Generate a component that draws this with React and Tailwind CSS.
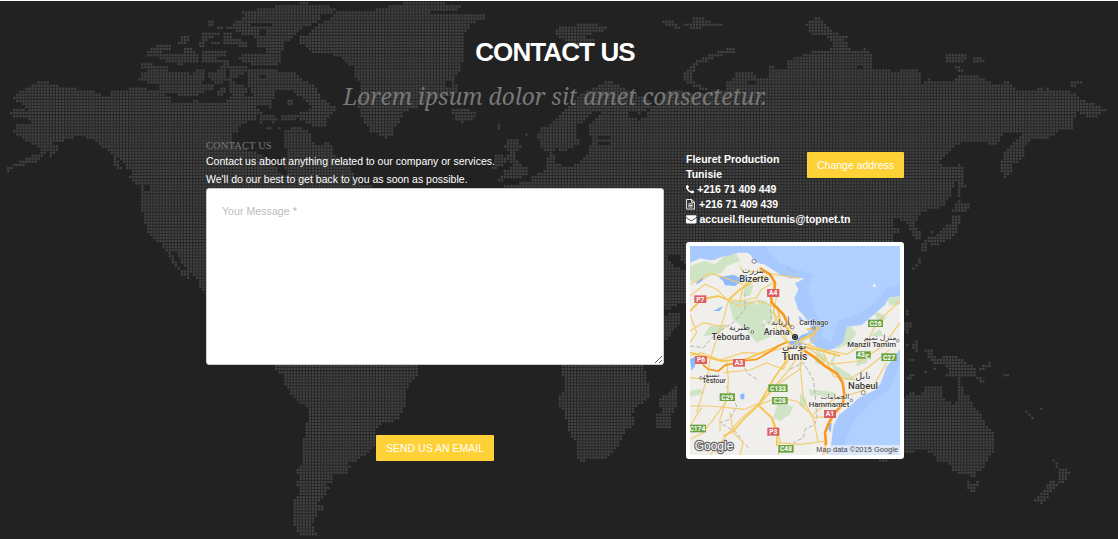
import React from "react";

const PITCH = 3.048;
const ORIGIN_X = 7.7 - PITCH * 3;
const ORIGIN_Y = 82.1 - PITCH * 27;

// World outline, split into six panels. "+" adds land, "-" carves out water.
const PANELS = [
  {
    x: 0,
    y: 0,
    shapes: [
      ["+", "115,243 135,243 165,252 190,262 225,262 232,268 275,268 300,280 312,290 325,283 335,272 345,272 358,262 368,270 390,262 430,262 460,268 490,268 490,280 515,292 515,303 560,303 590,300 600,303 680,303 690,290 700,285 740,285 770,290 775,310 770,325 780,335 770,350 765,360 740,362 720,380 710,392 695,405 695,425 720,440 760,455 800,470 830,500 840,525 860,520 850,490 860,460 853,430 853,390 880,380 915,385 930,400 935,425 960,435 980,420 995,440 1000,460 1030,480 1050,500 1060,520 1070,540 1119,560 1119,570 620,570 620,810 560,810 545,790 525,755 510,745 520,775 540,810 530,805 515,790 505,765 495,750 480,730 460,715 445,700 432,660 422,625 422,560 395,545 385,530 395,515 375,500 365,480 345,470 325,450 300,435 285,420 260,412 225,405 205,418 175,425 165,420 155,430 175,440 165,455 150,468 145,450 130,460 105,485 80,490 60,500 40,500 20,515 15,510 25,498 60,480 100,462 120,455 110,440 90,430 60,410 38,400 45,375 70,370 90,365 85,350 60,355 35,350 30,338 40,325 70,325 80,330 75,320 60,310 38,292 50,283 65,268 90,255"],
      ["+", "335,480 350,470 355,490 368,512 355,508 342,495"],
      ["-", "425,548 445,555 445,575 435,570"],
      ["+", "690,75 730,50 725,35 740,30 820,20 830,12 890,12 905,3 925,6 925,14 980,12 1005,25 1005,30 990,38 960,45 965,55 950,68 920,75 905,85 890,95 880,110 850,130 855,145 840,150 840,190 820,193 760,193 715,180 720,165 735,155 770,160 800,155 810,148 770,140 765,115 750,105 720,100 700,90"],
      ["-", "750,66 815,66 815,78 750,78"],
      ["-", "780,88 796,88 796,102 780,102"],
      ["+", "622,60 640,60 640,76 622,76"],
      ["+", "648,77 668,77 668,85 648,85"],
      ["+", "675,77 695,77 695,87 675,87"],
      ["+", "540,105 565,105 565,115 552,137 532,135 532,124 543,122"],
      ["+", "605,96 655,94 655,105 620,115 612,142 597,142 600,120"],
      ["+", "665,100 690,98 700,115 735,120 740,142 715,137 670,127"],
      ["+", "635,123 662,123 662,136 635,130"],
      ["+", "440,150 470,133 512,133 512,145 480,155 520,160 545,155 555,141 572,141 590,160 595,183 560,187 540,197 520,187 490,182 470,168 440,166"],
      ["+", "600,153 677,150 677,167 640,170 660,180 690,180 690,192 600,190"],
      ["+", "422,188 455,188 465,195 500,198 505,213 530,210 560,213 575,222 590,203 612,208 615,230 600,250 640,250 640,270 600,275 590,287 550,287 500,277 480,265 470,247 440,247 413,240 418,222 435,210 422,200"],
      ["+", "620,220 650,208 680,203 682,242 645,252 630,240"],
      ["+", "655,195 685,195 685,203 655,203"],
      ["+", "688,198 742,198 742,215 720,225 690,240"],
      ["+", "650,270 675,258 678,282 650,285"],
      ["+", "688,243 730,250 740,270 730,290 700,295 688,270"],
      ["+", "740,208 830,203 840,218 885,218 905,235 945,258 955,280 965,293 985,305 1003,318 1003,335 985,347 978,378 950,382 930,370 905,360 885,345 900,335 925,330 930,320 910,300 895,285 870,270 850,265 825,270 825,290 790,310 770,290 750,275 740,250"],
      ["-", "778,220 792,220 792,234 778,234"],
      ["+", "768,285 812,285 815,320 785,318 770,310"],
      ["+", "863,296 880,296 880,316 863,316"],
      ["+", "845,342 890,342 890,358 845,358"],
      ["+", "775,335 800,342 837,350 822,366 842,378 835,395 830,370 790,360 780,375 775,360"],
      ["+", "795,378 815,378 815,392 795,392"],
      ["+", "898,105 925,105 930,90 965,65 985,55 1000,40 1015,30 1090,30 1119,28 1119,405 1110,385 1095,375 1080,345 1070,310 1085,280 1075,240 1060,235 1060,200 1030,180 1020,165 940,162 920,140 898,128"],
    ],
  },
  {
    x: 1119,
    y: 0,
    shapes: [
      ["+", "-8,35 20,20 90,12 90,3 215,3 215,12 262,13 257,27 170,32 170,38 260,38 335,40 335,55 300,65 270,100 275,135 270,180 260,210 240,235 250,250 250,275 240,290 210,290 165,300 130,320 90,335 75,370 60,385 55,408 35,415 20,402 -8,395"],
      ["-", "215,240 232,240 232,262 215,262"],
      ["+", "235,325 305,330 305,352 285,360 262,368 240,350"],
      ["+", "370,370 382,370 382,386 370,386"],
      ["+", "455,398 463,398 463,406 455,406"],
      ["+", "405,416 437,416 432,430 442,440 430,455 425,470 445,490 462,505 462,527 420,535 373,542 373,535 395,525 385,515 410,505 415,490 395,475 410,455 390,440"],
      ["+", "362,462 390,462 397,480 385,500 357,505"],
      ["+", "390,550 428,550 428,562 390,562"],
      ["+", "546,85 580,75 600,80 610,68 675,68 675,76 710,76 690,92 655,97 640,110 667,120 640,145 600,145 580,120 550,107"],
      ["+", "857,58 900,60 922,82 905,84 880,75"],
      ["+", "930,68 960,65 960,50 995,50 1000,62 1050,68 1045,76 1010,78 975,84 935,80"],
      ["+", "930,215 950,200 960,185 990,170 1010,158 1060,150 1060,142 1086,142 1086,160 1040,165 1010,180 975,190 960,215 955,235 975,250 1000,260 1000,270 970,262 940,245 930,232"],
      ["+", "492,400 505,380 530,375 560,345 580,320 600,300 620,280 650,268 680,252 710,241 740,255 765,275 800,285 830,298 825,320 850,310 870,280 900,268 960,280 1000,275 1030,270 1055,270 1060,240 1080,235 1090,217 1119,217 1119,570 430,570 430,550 470,540 480,525 500,515 520,500 520,475 530,450 510,450 500,430"],
      ["-", "530,455 545,445 570,452 615,430 610,375 640,360 645,345 668,330 685,338 665,357 645,370 640,390 655,412 650,440 640,460 625,482 600,494 570,497 550,485 550,465"],
      ["-", "675,409 712,409 712,416 675,416"],
      ["-", "675,428 712,428 712,434 675,434"],
      ["-", "765,332 800,340 830,325 820,345 795,358 765,347"],
      ["+", "870,560 1119,560 1119,840 870,840"],
      ["-", "885,765 915,765 940,795 940,815 915,800 890,785"],
    ],
  },
  {
    x: 2235,
    y: 0,
    shapes: [
      ["+", "182,68 195,58 213,49 235,60 250,80 265,96 305,106 300,120 320,150 352,150 360,141 380,163 378,195 390,205 425,206 440,213 510,203 525,215 530,250 545,232 570,243 620,240 635,226 700,226 730,245 765,250 785,241 805,258 810,270 850,272 880,263 890,260 893,280 903,260 915,268 970,268 995,288 1020,303 1065,316 1084,328 1055,345 1050,358 1030,350 1005,338 1000,325 985,355 985,386 945,390 910,412 880,412 850,422 835,440 838,467 820,487 800,495 795,520 778,532 765,510 770,470 785,445 810,425 820,405 835,400 800,398 775,398 755,432 735,434 715,420 690,425 650,428 620,440 605,465 585,485 595,495 630,500 640,488 655,500 655,540 664,558 647,562 643,588 636,588 636,560 630,530 620,575 600,610 580,625 550,630 520,642 515,660 500,670 525,690 525,714 505,714 490,680 470,660 450,655 440,675 462,683 462,699 445,700 445,730 -10,730 -10,225 20,213 40,235 70,230 72,195 95,205 125,200 127,178 180,160 215,150 245,150 265,130 245,112 230,105 205,102 190,99"],
      ["-", "335,195 352,195 352,205 335,205"],
      ["-", "10,240 40,248 35,255 5,255"],
      ["+", "593,170 605,158 660,161 664,178 640,186 605,186"],
      ["+", "673,168 700,168 720,178 720,186 690,186"],
      ["+", "620,196 645,196 656,210 635,212"],
      ["+", "977,241 1012,241 1010,250 992,257 977,257"],
      ["+", "635,598 648,598 652,612 674,612 670,627 655,640 630,635 620,635 630,615"],
      ["+", "620,646 647,646 645,665 630,700 610,717 570,735 535,724 545,710 575,705 590,688 605,675 620,668"],
      ["+", "528,728 545,726 545,754 528,754"],
      ["+", "555,690 564,690 564,699 555,699"],
      ["+", "500,805 520,785 518,772 527,772 527,788 508,808"],
    ],
  },
  {
    x: 0,
    y: 810,
    shapes: [
      ["+", "530,-5 618,-5 618,70 598,55 595,30 572,10 567,27 545,14"],
      ["+", "815,280 1122,280 1122,525 1090,555 1065,575 1050,572 1035,565 1052,585 1035,612 1000,612 997,637 970,640 987,645 985,658 965,687 950,692 945,705 970,703 970,721 950,725 945,740 935,760 945,785 970,800 900,800 880,760 878,690 897,665 888,640 895,620 886,600 908,580 905,515 918,470 922,410 880,383 870,365 852,347 850,315 830,300"],
    ],
  },
  {
    x: 1119,
    y: 810,
    shapes: [
      ["+", "-5,280 135,280 132,320 110,340 97,365 99,395 85,430 77,447 30,458 10,470 -5,515"],
      ["+", "565,280 812,280 820,320 829,350 827,385 790,410 777,430 784,465 760,477 745,505 725,540 690,567 640,565 634,576 620,574 610,555 610,520 590,500 583,460 570,425 556,405 558,375 575,355 575,325 565,310"],
      ["+", "870,-5 915,-5 922,10 938,15 938,98 905,105 880,117 870,105"],
      ["+", "870,140 895,128 920,128 917,160 895,185 880,210 870,210"],
      ["+", "858,383 885,370 903,345 912,347 910,400 895,430 892,472 848,474 848,430 862,425"],
    ],
  },
  {
    x: 2235,
    y: 810,
    shapes: [
      ["+", "478,110 490,118 490,132 478,130"],
      ["+", "470,155 500,155 492,188 475,185"],
      ["+", "500,225 510,210 518,210 518,243 505,243"],
      ["+", "484,220 490,220 490,228 484,228"],
      ["+", "493,264 510,264 510,272 493,272"],
      ["+", "538,236 562,236 565,255 590,265 595,255 630,257 655,266 665,280 692,290 692,310 700,327 680,318 650,316 650,350 660,376 673,378 682,400 697,420 710,435 717,455 735,475 748,487 748,538 728,560 717,585 710,602 692,604 692,621 675,619 665,604 655,612 640,607 620,598 610,578 585,572 573,574 573,555 555,545 530,535 490,547 470,550 470,385 495,366 525,375 538,348 592,348 585,375 600,392 625,400 638,385 636,316 603,316 613,300 590,280 570,282 545,255"],
      ["+", "703,287 730,285 733,275 738,275 738,290 710,300 703,298"],
      ["+", "565,292 573,292 573,300 565,300"],
      ["+", "537,301 545,301 545,309 537,309"],
      ["+", "478,320 492,318 492,310 508,310 508,318 488,328 478,328"],
      ["+", "775,310 792,310 792,318 775,318"],
      ["+", "698,320 710,320 718,335 705,336"],
      ["+", "665,629 675,640 692,640 692,629 701,629 690,665 675,665 667,655"],
      ["+", "400,565 427,565 427,575 400,575"],
      ["+", "921,567 930,567 942,590 955,595 975,603 967,617 955,638 940,635 932,618 943,605 930,590"],
      ["+", "913,629 928,629 938,640 920,660 905,683 892,702 868,694 868,685 880,675 900,652"],
      ["+", "839,420 847,420 865,440 875,429 875,437 862,447 848,437"],
      ["+", "884,411 892,411 892,419 884,419"],
    ],
  },
];

function landCells() {
  const cells = new Set();
  for (const panel of PANELS) {
    for (const [mode, text] of panel.shapes) {
      const pts = text.split(" ").map((p) => {
        const [a, b] = p.split(",").map(Number);
        return [(panel.x + a) / 3, (panel.y + b) / 3];
      });
      const ys = pts.map((p) => p[1]);
      const r0 = Math.ceil((Math.min(...ys) - ORIGIN_Y) / PITCH);
      const r1 = Math.floor((Math.max(...ys) - ORIGIN_Y) / PITCH);
      for (let r = r0; r <= r1; r++) {
        const y = ORIGIN_Y + r * PITCH;
        const xs = [];
        pts.forEach((p, i) => {
          const q = pts[(i + 1) % pts.length];
          if (p[1] <= y !== q[1] <= y) {
            xs.push(p[0] + ((y - p[1]) / (q[1] - p[1])) * (q[0] - p[0]));
          }
        });
        xs.sort((a, b) => a - b);
        for (let i = 0; i + 1 < xs.length; i += 2) {
          const c0 = Math.ceil((xs[i] - ORIGIN_X) / PITCH);
          const c1 = Math.floor((xs[i + 1] - ORIGIN_X) / PITCH);
          for (let c = c0; c <= c1; c++) {
            const key = c * 1000 + r;
            if (mode === "+") cells.add(key);
            else cells.delete(key);
          }
        }
      }
    }
  }
  return cells;
}

function squares(cells, size) {
  let d = "";
  cells.forEach((key) => {
    const c = Math.floor(key / 1000);
    const r = key - c * 1000;
    const x = (ORIGIN_X + c * PITCH + 0.5 - size / 2).toFixed(2);
    const y = (ORIGIN_Y + r * PITCH + 0.5 - size / 2).toFixed(2);
    d += `M${x} ${y}h${size}v${size}h-${size}z`;
  });
  return d;
}

const CELLS = landCells();
const DOT_HALOS = squares(CELLS, 3);
const DOTS = squares(CELLS, 2);

function WorldMap() {
  return (
    <svg className="absolute -top-px left-0" width="1118" height="536" viewBox="0 0 1118 536" aria-hidden="true">
      <path d={DOT_HALOS} fill="#292929" />
      <path d={DOTS} fill="#444" />
    </svg>
  );
}

const MINOR_ROADS = [
  "M0 115L30 100 60 82 95 92 130 105 160 115",
  "M0 150L45 115 80 130 110 160 150 165 200 155 215 130 250 110",
  "M115 165L100 220 78 285 60 340 50 400 20 500",
  "M0 255L40 230 75 238 110 240",
  "M115 165L150 180 200 165 250 180 260 250 300 300",
  "M0 330L35 320 90 342 160 320 220 322 300 300",
  "M110 345L115 400 112 450 90 520 90 555",
  "M0 480L60 480 165 490 210 470 290 380 340 310",
  "M50 400L0 395",
  "M100 380L180 372 230 350 280 370 300 330",
  "M210 470L150 520 100 580 60 627",
  "M0 580L40 560 110 465",
  "M205 478L260 455 320 465 375 515 440 510",
  "M205 475L250 520 270 580 265 627",
  "M265 590L330 595 410 585",
  "M300 300L270 240 250 200",
  "M330 290L400 310 470 325 530 290 560 230 630 165",
  "M355 305L420 355 510 345 580 300 630 230",
  "M400 320L430 390 480 400 540 360 600 310",
  "M340 300L330 370 270 410 205 478",
  "M330 350L340 460 370 520 385 590",
  "M450 450L400 480 370 505",
  "M450 455L500 440 550 420 590 350",
  "M150 60L160 80 200 75 270 88 330 96",
  "M250 100L260 150 250 200 310 270",
  "M300 300L370 270 385 245",
  "M330 320L380 275M150 165L160 120 210 90",
  "M0 205L20 260 0 290",
  "M120 500L130 560 160 590 150 627",
  "M35 485L0 540",
];

const GREENS = [
  "M0 60L45 45 75 55 110 25 140 25 150 45 110 60 95 80 60 90 25 110 0 105Z",
  "M115 165L190 165 215 190 220 235 245 270 200 290 165 250 130 220Z",
  "M165 95L190 120 180 150 160 150Z",
  "M200 160L230 165 250 200 240 240 215 215Z",
  "M60 240L110 235 90 265 40 270Z",
  "M380 310L410 335 400 360 375 350Z",
  "M460 242L480 240 500 260 480 290 440 310 430 355 480 385 500 405 450 400 420 350 440 310Z",
  "M355 430L430 438 435 450 360 448Z",
  "M262 475L310 480 300 505 270 525 250 515Z",
  "M590 160L630 150 630 175 600 178Z",
  "M500 340L540 320 530 350 500 360Z",
  "M550 200L570 200 590 215 570 230Z",
  "M0 435L30 430 45 442 0 452Z",
  "M330 440L350 460 345 485 330 480Z",
  "M540 270L570 250 580 270Z",
];

const SHIELDS = [
  ["P7", 13, 148, 36, 23, "r"],
  ["A4", 231, 129, 37, 24, "r"],
  ["P6", 15, 330, 36, 24, "r"],
  ["A3", 129, 339, 36, 23, "r"],
  ["A1", 402, 492, 36, 24, "r"],
  ["P3", 232, 545, 36, 24, "r"],
  ["C26", 534, 221, 45, 22, "g"],
  ["43ج", 498, 316, 44, 22, "g"],
  ["C27", 574, 322, 46, 23, "g"],
  ["C29", 89, 442, 46, 23, "g"],
  ["C133", 235, 415, 58, 23, "g"],
  ["C28", 246, 453, 47, 22, "g"],
  ["C174", -4, 536, 52, 23, "g"],
  ["C48", 265, 597, 46, 23, "g"],
];

const PLACES = [
  ["بنزرت", 189, 82, 66, 25],
  ["Bizerte", 192, 108, 88, 27],
  ["أريانة", 271, 238, 56, 25],
  ["Ariana", 260, 268, 78, 27],
  ["Carthago", 371, 236, 87, 22],
  ["تونس", 313, 309, 72, 27],
  ["Tunis", 314, 341, 77, 31],
  ["طبرية", 148, 251, 64, 25],
  ["Tebourba", 122, 281, 115, 27],
  ["تستور", 62, 392, 52, 20],
  ["Testour", 72, 412, 71, 21],
  ["منزل تميم", 570, 281, 98, 22],
  ["Manzil Tamim", 545, 304, 146, 24],
  ["نابل", 519, 398, 46, 28],
  ["Nabeul", 519, 429, 90, 29],
  ["الحمامات", 435, 459, 86, 21],
  ["Hammamet", 417, 482, 122, 24],
];

const MARKERS = [
  [192, 46, 6],
  [307, 244, 5],
  [372, 246, 4],
  [187, 258, 4],
  [33, 396, 4],
  [623, 284, 4],
  [520, 440, 6],
  [484, 463, 4],
];

function TunisMap() {
  return (
    <svg width="210" height="209" viewBox="0 0 630 627" className="block" role="img">
      <rect width="630" height="627" fill="#f1efec" />
      {GREENS.map((d) => (
        <path key={d} d={d} fill="#cfe3c5" />
      ))}
      <path
        d="M0 50L30 37 60 43 72 42 95 32 120 28 145 20 172 20 185 30 192 48 225 56 255 76 270 86 300 97 345 97 315 112 325 130 313 157 325 192 340 207 350 222 362 240 353 262 362 288 380 302 405 315 435 307 460 287 470 242 515 237 550 207 585 177 597 155 630 150V0H0Z"
        fill="#a8c9fd"
      />
      <path
        d="M225 0L270 55 370 85 355 130 375 195 400 240 395 275 425 285 445 225 505 205 560 165 590 125 630 115V0Z"
        fill="#b0d0ff"
      />
      <path
        d="M630 310L608 340 590 362 572 412 555 432 505 457 478 482 447 507 430 540 424 590 418 627H630Z"
        fill="#a8c9fd"
      />
      <path d="M630 350L600 430 540 470 495 520 470 570 460 627H630Z" fill="#b0d0ff" />
      <path d="M84 91L110 90 130 86 150 95 152 108 135 120 105 118 100 106Z" fill="#8db9ff" />
      <path d="M153 90L168 88 170 103 158 105Z" fill="#8db9ff" />
      <path d="M292 286L315 284 335 267 355 260 350 275 325 287 345 290 320 305 300 295Z" fill="#8db9ff" />
      <path d="M325 210L340 220 330 225Z M0 340L20 330 15 360 5 375Z M150 445L163 442 163 460 152 460Z M70 195L98 180 90 195Z M18 110L40 92 38 103 22 115Z" fill="#8db9ff" />
      <path d="M418 535L425 530 422 560 415 550Z" fill="#8db9ff" />
      <path d="M547 122L553 112 560 124Z" fill="#f1efec" />

      <g fill="none" stroke="#a9a9a9" strokeWidth="2.5" strokeDasharray="13 6">
        <path d="M290 60L315 85" />
        <path d="M0 300L40 305 80 260 130 230 165 190 165 140" />
        <path d="M240 170L245 225 215 240" />
        <path d="M110 420L140 480 120 520 90 530 140 560 160 590 180 610" />
        <path d="M200 400L170 380 160 350" />
        <path d="M300 370L340 350 370 400 375 440 380 510 375 535 345 550 340 575 310 590" />
      </g>

      <g fill="none" stroke="#f2cd70" strokeWidth="3.5" strokeLinejoin="round">
        {MINOR_ROADS.map((d) => (
          <path key={d} d={d} />
        ))}
      </g>
      <g fill="none" stroke="#f5c753" strokeWidth="5.5" strokeLinejoin="round">
        <path d="M0 195L35 160 85 150 115 162 150 130 200 100 230 90" />
        <path d="M0 320L95 345 165 340 240 310 300 285" />
        <path d="M205 478L245 515 262 570 260 600" />
        <path d="M300 300L285 350 250 400 205 478 160 520 130 555 100 570" />
        <path d="M325 290L300 255 270 225 262 180" />
        <path d="M330 280L370 265 385 245 350 250" />
        <path d="M320 300L380 310 450 330" />
      </g>
      <g fill="none" stroke="#f79a1e" strokeWidth="8" strokeLinejoin="round" strokeLinecap="round">
        <path d="M212 68L240 85 255 110 253 135 243 150 245 170 280 205 292 230 305 245" />
        <path d="M345 315L375 335 405 360 440 382 458 410 463 445 458 475 430 505 415 535 405 560 408 590 400 627" />
      </g>
      <path d="M38 355L55 370 85 375 105 358 130 352 165 344 200 340 235 320 265 300 290 288" fill="none" stroke="#f79a1e" strokeWidth="5" />

      {MARKERS.map(([x, y, r]) => (
        <circle key={`${x}-${y}`} cx={x} cy={y} r={r} fill="#fff" stroke="#666" strokeWidth="2.5" />
      ))}
      <circle cx="315" cy="273" r="9" fill="#222" />
      <circle cx="315" cy="273" r="5" fill="none" stroke="#aaa" strokeWidth="1.5" />

      <g
        fill="#383838"
        stroke="#fff"
        strokeWidth="3"
        strokeOpacity="0.6"
        paintOrder="stroke"
        textAnchor="middle"
        fontWeight="500"
        fontFamily="Roboto, 'DejaVu Sans', sans-serif"
      >
        {PLACES.map(([name, x, y, w, size]) => (
          <text key={name} x={x} y={y} fontSize={size} textLength={w} lengthAdjust="spacingAndGlyphs">
            {name}
          </text>
        ))}
      </g>

      {SHIELDS.map(([label, x, y, w, h, tone]) => (
        <g key={label}>
          <rect x={x} y={y} width={w} height={h} fill={tone === "r" ? "#db5f63" : "#6aa342"} />
          <text
            x={x + w / 2}
            y={y + h / 2 + 7}
            fontSize="20"
            fontWeight="700"
            fill="#fff"
            textAnchor="middle"
            fontFamily="Roboto, 'DejaVu Sans', sans-serif"
          >
            {label}
          </text>
        </g>
      ))}

      <text
        x="14"
        y="613"
        fontSize="36"
        fill="#fff"
        stroke="#666"
        strokeWidth="7"
        strokeLinejoin="round"
        paintOrder="stroke"
        textLength="116"
        lengthAdjust="spacingAndGlyphs"
        fontFamily="'Liberation Sans', sans-serif"
      >
        Google
      </text>
      <rect x="368" y="597" width="262" height="30" fill="#f5f5f5" fillOpacity="0.65" />
      <text x="379" y="619" fontSize="22" fill="#444" textLength="245" fontFamily="'Liberation Sans', sans-serif">
        Map data ©2015 Google
      </text>
    </svg>
  );
}

function PhoneIcon() {
  return (
    <svg className="h-[8.25px] w-[8.25px] shrink-0" viewBox="0 0 1408 1408" fill="currentColor">
      <path d="M1408 1112q0 27-10 70.5t-21 68.5q-21 50-122 106-94 51-186 51-27 0-53-3.5t-57.5-12.5-47-14.5-55.5-20.5-49-18q-98-35-175-83-127-79-264-216t-216-264q-48-77-83-175-3-9-18-49t-20.5-55.5-14.5-47-12.5-57.5-3.5-53q0-92 51-186 56-101 106-122 25-11 68.5-21t70.5-10q14 0 21 3 18 6 53 76 11 19 30 54t35 63.5 31 53.5q3 4 17.5 25t21.5 35.5 7 28.5q0 20-28.5 50t-62 55-62 53-28.5 46q0 9 5 22.5t8.5 20.5 14 24 11.5 19q76 137 174 235t235 174q2 1 19 11.5t24 14 20.5 8.5 22.5 5q18 0 46-28.5t53-62 55-62 50-28.5q14 0 28.5 7t35.5 21.5 25 17.5q25 15 53.5 31t63.5 35 54 30q70 35 76 53 3 7 3 21z" />
    </svg>
  );
}

function FileIcon() {
  return (
    <svg className="h-[10.5px] w-[9px] shrink-0" viewBox="0 0 1536 1792" fill="none" stroke="currentColor" strokeWidth="150">
      <path d="M75 75H960L1461 576V1717H75ZM960 64V576H1472M384 832H1152M384 1088H1152M384 1344H1152" />
    </svg>
  );
}

function EnvelopeIcon() {
  return (
    <svg className="h-[8.5px] w-[10.5px] shrink-0" viewBox="0 256 1792 1408" fill="currentColor">
      <path d="M1792 710v794q0 66-47 113t-113 47h-1472q-66 0-113-47t-47-113v-794q44 49 101 87 362 246 497 345 57 42 92.5 65.5t94.5 48 110 24.5h2q51 0 110-24.5t94.5-48 92.5-65.5q170-123 498-345 57-39 100-87zm0-294q0 79-49 151t-122 123q-376 261-468 325-10 7-42.5 31t-54 38.5-52 32.5-57.5 27-50 9h-2q-23 0-50-9t-57.5-27-52-32.5-54-38.5-42.5-31q-91-64-262-182.5t-205-142.5q-62-42-117-115.5t-55-136.5q0-78 41.5-130t118.5-52h1472q65 0 112.5 47t47.5 113z" />
    </svg>
  );
}

function YellowButton({ children, className }) {
  return (
    <button
      type="button"
      className={`h-[26px] rounded-[1px] bg-[#fed136] text-center text-[10.5px] leading-[26px] whitespace-nowrap text-white ${className}`}
    >
      {children}
    </button>
  );
}

export default function App() {
  return (
    <section className="relative h-[539px] w-[1118px] overflow-hidden border-t border-white bg-[#222] font-['Liberation_Sans',Arial,sans-serif] text-[10.5px] text-white">
      <WorldMap />
      <div className="relative ml-[206px] w-[698px]">
        <header className="flex flex-col items-center pt-[34px] text-center">
          <h2 className="text-[26px] leading-[34px] font-bold tracking-[-0.9px]">CONTACT US</h2>
          <p className="pt-[12px] font-['Droid_Serif','Noto_Serif','DejaVu_Serif',serif] text-[22.75px] leading-[32px] whitespace-nowrap text-[#777] italic">
            Lorem ipsum dolor sit amet consectetur.
          </p>
        </header>

        <div className="flex justify-between pt-[26px]">
          <form className="flex w-[458px] flex-col">
            <h3 className="font-['Liberation_Serif',serif] text-[10.5px] leading-[13px] tracking-[0.12px] text-[#777]">CONTACT US</h3>
            <p className="leading-[18px]">
              Contact us about anything related to our company or services.
              <br />
              We'll do our best to get back to you as soon as possible.
            </p>
            <textarea
              placeholder="Your Message *"
              className="block h-[177px] w-[458px] resize rounded-[3px] border border-[#ccc] bg-white p-[15px] text-[10.5px] leading-[15px] tracking-[0.08px] placeholder:text-[#bbb]"
            />
            <div className="flex justify-center pt-[70px]">
              <YellowButton className="w-[118px]">SEND US AN EMAIL</YellowButton>
            </div>
          </form>

          <aside className="w-[218px] pt-[13px]">
            <div className="flex h-[90px] items-start justify-between">
              <address className="w-0 font-bold leading-[15px] whitespace-nowrap not-italic">
                <p>Fleuret Production</p>
                <p>Tunisie</p>
                <p className="flex items-center gap-[3px]">
                  <PhoneIcon />
                  +216 71 409 449
                </p>
                <p className="flex items-center gap-[4px]">
                  <FileIcon />
                  +216 71 409 439
                </p>
                <p className="flex items-center gap-[3px]">
                  <EnvelopeIcon />
                  accueil.fleurettunis@topnet.tn
                </p>
              </address>
              <YellowButton className="w-[97px]">Change address</YellowButton>
            </div>
            <div className="h-[217px] w-[218px] rounded-[3px] bg-white p-[4px]">
              <TunisMap />
            </div>
          </aside>
        </div>
      </div>
    </section>
  );
}
